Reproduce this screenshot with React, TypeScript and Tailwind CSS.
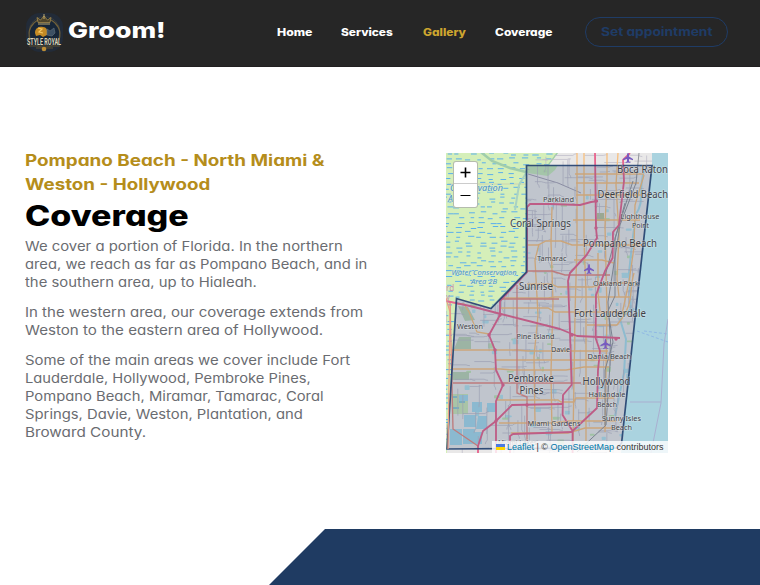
import { useLayoutEffect, useRef, useState, type ReactNode } from 'react';

function Line({ w, children, className = '' }: { w: number; children: ReactNode; className?: string }) {
  const ref = useRef<HTMLSpanElement>(null);
  const [scale, setScale] = useState(1);
  useLayoutEffect(() => {
    if (ref.current) setScale(w / ref.current.offsetWidth);
  }, [w]);
  return (
    <span className={'block text-left whitespace-nowrap ' + className} style={{ width: w }}>
      <span ref={ref} className="inline-block origin-left" style={{ transform: `scaleX(${scale})` }}>
        {children}
      </span>
    </span>
  );
}

function Logo() {
  return (
    <svg className="h-[39px] w-[37px]" viewBox="0 0 37 39">
      <rect width="37" height="39" rx="14" fill="#222b38" />
      <circle cx="18.5" cy="19" r="15.5" fill="#172638" stroke="#3a3e40" />
      <path d="M4 27C1 17 6 10 12 7M33 27C36 17 31 10 25 7" stroke="#6e5f3a" strokeWidth="1.2" fill="none" />
      <path d="M12 9.500 11 4.500 14.500 7 18 3 21.500 7 25 4.500 24 9.500Z" fill="#4f452b" stroke="#a58a4b" strokeWidth=".8" />
      <path d="M18 1v5M12 11h12" stroke="#cfb878" strokeWidth=".9" />
      <path d="M9 20c0-5 4-7 8-6 4 0 5 4 4 8l-4 2-3-2-4 1z" fill="#c48a24" />
      <path d="M12 15l4 1-3 3 4 1" stroke="#f3c662" strokeWidth="1.2" fill="none" />
      <path d="M21 16l3 2 4-3 1 5-3 3-5-1z" fill="#3d5063" stroke="#61717c" strokeWidth=".6" />
      <path d="M3 33h31M10 35h17" stroke="#6e5a31" strokeWidth=".8" />
      <text x="1" y="31.800" textLength="34" lengthAdjust="spacingAndGlyphs" fill="#ded4b5" className="font-['Roboto',sans-serif] text-[8.500px] font-bold">STYLE ROYAL</text>
      <circle cx="18" cy="36" r="2.300" fill="#bd8e35" />
    </svg>
  );
}

type Label = [string, number, number, number, number];
const labels: Label[] = [
  ['Boca Raton', 171, 20, 51, 10.5], ['Deerfield Beach', 151.5, 45, 70.5, 10.5],
  ['Parkland', 97, 49, 31, 7.5], ['Coral Springs', 64, 74, 61, 10.5],
  ['Lighthouse', 174.5, 65.5, 39, 7.5], ['Point', 186, 75, 17, 7.5],
  ['Pompano Beach', 137, 94, 74, 10.5], ['Tamarac', 91, 108, 29.5, 7.5],
  ['Sunrise', 73, 137, 34, 10.5], ['Oakland Park', 147, 133, 46, 7.5],
  ['Fort Lauderdale', 128, 164, 72, 10.5], ['Weston', 11, 176, 26, 7.5],
  ['Pine Island', 70.5, 185.5, 38, 7.5], ['Davie', 105, 199, 19, 7.5],
  ['Dania Beach', 141.5, 205.5, 44, 7.5], ['Pembroke', 62, 228.5, 46, 10.5],
  ['Pines', 73.5, 241, 24, 10.5], ['Hollywood', 136.5, 232, 48, 10.5],
  ['Hallandale', 142.5, 244, 37, 7.5], ['Beach', 151, 253.5, 20, 7.5],
  ['Miami Gardens', 81.5, 273, 53, 7.5], ['Sunny Isles', 156, 267.5, 39, 7.5],
  ['Beach', 165, 277, 21, 7.5], ['Miami Lakes', 52, 291.5, 39, 7.5],
];

const area = 'M80.500 12.500H206L191 147L175.600 290L172 295L1 296L10.500 145.500L45 155.500L80.500 119Z';

// Repeatable jitter for the minor streets, ponds and marsh reeds.
const noise = (n: number) => {
  const v = Math.sin(n * 12.9898) * 43758.5453;
  return v - Math.floor(v);
};

const streets = Array.from({ length: 380 }, (_, i) => {
  const x = noise(i) * 206;
  const y = noise(i + 700) * 300;
  const l = 6 + noise(i + 300) * 19;
  const b = noise(i + 90) * 4 - 2;
  return i % 2 ? `M${x} ${y}h${l}q2 ${b} 4 ${b}` : `M${x} ${y}v${l}q${b} 2 ${b} 4`;
}).join('');

const reeds = Array.from({ length: 62 * 11 }, (_, i) => {
  const row = Math.floor(i / 11);
  const x = (i % 11) * 11 + noise(i + 11) * 7 - 4;
  return `M${x} ${row * 4.9 + Math.floor(noise(i + 500) * 3)}h${3.5 + noise(i + 900) * 3}`;
}).join('');

const ponds = Array.from({ length: 120 }, (_, i) => ({
  x: 10 + noise(i + 41) * 183,
  y: 12 + noise(i + 251) * 282,
  w: 2 + noise(i + 77) * 5,
  h: 1.5 + noise(i + 19) * 4,
  green: i % 3 === 0,
}));

function Plane({ x, y }: { x: number; y: number }) {
  return (
    <path
      transform={`translate(${x} ${y})`}
      d="M0-5C1-5 1-3 1-1.500L5 1V2.200L1 1V3.300L2.500 4.500V5L0 4.400-2.500 5V4.500L-1 3.300V1L-5 2.200V1L-1-1.500C-1-3-1-5 0-5Z"
      fill="#775bc0"
    />
  );
}

function MapDrawing() {
  return (
    <svg className="block h-[300px] w-[222px]" viewBox="0 0 222 300">
      <defs>
        <clipPath id="marsh"><path d="M0 0H112L103 12H81V119L45 155L10 145L1 296V300H0Z" /></clipPath>
        <clipPath id="land"><path d="M81 0H206V12L191 147L176 300H0V145L45 155L81 119Z" /></clipPath>
      </defs>
      <rect width="222" height="300" fill="#aad3df" />
      <path d="M0 0H206V12L191 147L175.600 290L175 300H0Z" fill="#e9e8e8" />
      <g clipPath="url(#marsh)">
        <rect width="112" height="300" fill="#d5efb9" />
        <path d="M2 31H81" stroke="#cdd3b0" />
        <path d={reeds} stroke="#54acef" strokeWidth=".95" fill="none" />
        <path d="M36 0L46 8 64 15 80 19M112 0L103 12" stroke="#a0cdac" strokeWidth="2.500" fill="none" />
        <path d="M80 20L73 32 69 57M80 70V119L45 155" stroke="#a9d3c2" strokeWidth="2" fill="none" />
      </g>
      <g clipPath="url(#land)">
        <path d="M81 12h31l-3 5-7 6-21-3z" fill="#c6e8bb" />
        <path d="M82 21l30 9 23 10" stroke="#a5a0b2" fill="none" />
        {ponds.map((p, i) => (
          <rect key={i} x={p.x} y={p.y} width={p.w} height={p.h} rx=".7" fill={p.green ? '#c1e3b4' : '#b4e0ec'} />
        ))}
        <path d="M12 153l10 1 7 13-10 1zM13 184h12v12H8zM7 219h16v8H6z" fill="#bcd3b5" />
        <path d="M5 241h17v20H6z" fill="#cce7b8" />
        <path d="M6 244h5M13 249h6M7 255h6M16 243h5" stroke="#54acef" />
        <path d="M4 276h12v16H4zM18 262h12v12H18zM32 263h9v13H30zM17 276h12v15H17zM29 279h7v12h-7zM41 250h8v9h-8zM26 249h10v10H26zM13 242h9v6h-9z" fill="#a7d9eb" />
        <path d="M151 60h7v8h-7z" fill="#b9c39e" />
        <path d="M198 18C192 37 199 48 190 61L186 91 183 120 185 156 174 166 180 186 178 220 169 263" stroke="#a9dbea" strokeWidth="2" fill="none" />
        <path d={streets} fill="none" stroke="#bbb9c7" strokeWidth=".7" />
        <g fill="none" stroke="#f7c080" strokeWidth="1.350">
          <path d="M131 0V91l-2 70-2 127M138 0v88l2 50v150M161 0v27l-2 46 2 85-2 121M172 0l-2 32 3 50-2 44 2 18M106 54l-1 35 2 60-2 70 1 62M93 91l-4 16 3 55-4 42 1 66M198 22l-9 30-1 42-5 35-7 32M152 100v40l2 18" />
          <path d="M129 21h69M130 30h63M130 42h66M127 67h67M81 92h11l8 -4h15l11 4h70M81 131h24l7 3h34l18-4h20M54 145h48l7-1h76M54 155h48l7 4h63M6 197h66l10 1h80M50 207h118M6 216h48l13 1h53l18-3h25M50 247h62l3 2h13l2-4h38M53 270h51l18-2h48M65 280h57l17-5h29M11 151h7l5 8 8 20 12 2M188 120c-6 20 2 29-17 52h-30M128 107h28l12 3" />
        </g>
        <g fill="none" stroke="#e58b83" strokeWidth="1.350">
          <path d="M4 148l3 128 25 17M7 230h128M71 132v108l10 4v44M65 118h41l13 4h45M55 146h58" />
        </g>
        <g fill="none" stroke="#91949b" strokeWidth="1">
          <path d="M193 0l-3 30-16 42-12 77 3 47-5 76-29 27M187 28l-18 57v58l-7 15 5 31-8 28v55M179 50l-20 73" />
        </g>
        <g fill="none" stroke="#e7668f" strokeWidth="1.850" strokeLinejoin="round">
          <path d="M149 0L150 75 151 85 140.600 102 124 120 122 128 124 178 125.600 232 117 242 116.600 262 126.600 278V300" />
          <path d="M184 0L177 7 178 28 173 72 167 79 166.600 105 159 118 150 142 149.600 185 154 198 152 217 151 255 126.600 278" />
          <path d="M152 48L145 49 134 52 104 51H84L81 54V119L54 148V162L43 182 49 197 50 217 57 232 50 248V300" />
          <path d="M0 148L24 153 51 160 114 176 131 183 174 185M32 300V293L37 278 50 268 66 252 117 251M64 300V283L67 281 126 279" />
        </g>
        <g fill="#e7668f">{[[150,48],[150,75],[126,182],[170,186],[54,162],[43,182],[49,197],[57,232],[50,268],[81,252]].map(([x,y]) => <circle key={`${x}-${y}`} cx={x} cy={y} r="1.700" />)}</g>
      </g>
      <path d="M191 178l31 11M198 178l24 3" stroke="#90b9e4" strokeDasharray="3 2" />
      <path d="M222 166l-4 25-3 59-10 50M184 249h31" stroke="#a9afd0" fill="none" />
      <path d={area} fill="#1e3a63" fillOpacity=".2" />
      <path d={area} fill="none" stroke="#213f6e" strokeOpacity=".9" strokeWidth="1.700" />
      <path d="M0 145l4 14-2 137" stroke="#ec9d84" strokeWidth="1.200" fill="none" />
      <Plane x={182} y={5} /><Plane x={143} y={116} /><Plane x={159.500} y={191} />
      <g className="font-['Noto_Sans',sans-serif]" fill="#3e4148" stroke="#eef0ed" strokeOpacity=".45" strokeWidth="1.200" paintOrder="stroke">
        {labels.map(([text, x, y, w, size], i) => (
          <text key={i} x={x} y={y} textLength={w} lengthAdjust="spacingAndGlyphs" fontSize={size}>{text}</text>
        ))}
      </g>
      <g className="font-['Noto_Sans',sans-serif] italic" fill="#4994cf" stroke="#dceccb" strokeWidth="1" paintOrder="stroke" fontSize="7.500">
        <text x="5.500" y="121.500" textLength="65" lengthAdjust="spacingAndGlyphs">Water Conservation</text>
        <text x="25" y="130.500" textLength="26" lengthAdjust="spacingAndGlyphs">Area 2B</text>
        <text x="4" y="38" textLength="53" lengthAdjust="spacingAndGlyphs" fontSize="8">Conservation</text>
        <text x="2" y="49" textLength="29" lengthAdjust="spacingAndGlyphs" fontSize="8">Area 2A</text>
      </g>
      <g className="font-['Noto_Sans',sans-serif]" fill="#c690b0" fontSize="8"><text x="0" y="138">rd</text><text x="0" y="147">y</text></g>
    </svg>
  );
}

export default function App() {
  return (
    <div className="flex h-[585px] w-[760px] flex-col overflow-hidden bg-white font-['Inter',sans-serif] [font-feature-settings:'cv11']">
      <header className="flex h-[67px] shrink-0 items-center border-b border-[#211f20] bg-[#262626] pr-8 pb-[2px] pl-[26px] text-white">
        <Logo />
        <Line w={98} className="ml-[4.500px] pb-[4px] text-[22px] leading-[30px] font-extrabold">Groom!</Line>
        <nav className="ml-[111px] flex gap-[29.500px] pt-[2px] text-[10.500px] leading-4 font-extrabold">
          <Line w={35}>Home</Line>
          <Line w={52}>Services</Line>
          <Line w={43} className="text-[#cda52f]">Gallery</Line>
          <Line w={58}>Coverage</Line>
        </nav>
        <button className="ml-auto flex h-[30px] w-[143px] items-center justify-center rounded-full border border-[#1f3c66] text-[12px] font-bold text-[#1f3c66]">
          <Line w={111}>Set appointment</Line>
        </button>
      </header>
      <main className="flex h-[462px] shrink-0 items-start pt-[82px] pl-[25px]">
        <section className="w-[421px]">
          <h2 className="text-[15.500px] leading-6 font-bold text-[#b58d1b]">
            <Line w={299}>Pompano Beach - North Miami &amp;</Line>
            <Line w={185}>Weston - Hollywood</Line>
          </h2>
          <h1 className="-mt-px mb-px text-[28px] leading-10 font-extrabold text-black">
            <Line w={164}>Coverage</Line>
          </h1>
          <div className="flex flex-col gap-3 text-[13px] leading-[18px] font-normal text-[#6a6c71]">
            <div>
              <Line w={318}>We cover a portion of Florida. In the northern</Line>
              <Line w={342}>area, we reach as far as Pompano Beach, and in</Line>
              <Line w={232}>the southern area, up to Hialeah.</Line>
            </div>
            <div>
              <Line w={338}>In the western area, our coverage extends from</Line>
              <Line w={298}>Weston to the eastern area of Hollywood.</Line>
            </div>
            <div>
              <Line w={325}>Some of the main areas we cover include Fort</Line>
              <Line w={286}>Lauderdale, Hollywood, Pembroke Pines,</Line>
              <Line w={299}>Pompano Beach, Miramar, Tamarac, Coral</Line>
              <Line w={278}>Springs, Davie, Weston, Plantation, and</Line>
              <Line w={121}>Broward County.</Line>
            </div>
          </div>
        </section>
        <section className="relative mt-[4px] h-[300px] w-[222px] overflow-hidden">
          <MapDrawing />
          <div className="absolute top-[9px] left-2 flex h-[45px] w-[23px] flex-col overflow-hidden rounded-[2px] bg-white text-black shadow-[0_0_0_1px_#b5bcae]">
            <button className="flex h-[22px] items-center justify-center border-b border-[#cccccc]"><svg className="h-[11px] w-[11px]" viewBox="0 0 11 11"><path d="M.5 5.500h10M5.500 .5v10" stroke="currentColor" strokeWidth="1.600" /></svg></button>
            <button className="flex h-[23px] items-center justify-center"><svg className="h-[11px] w-[11px]" viewBox="0 0 11 11"><path d="M.5 5.500h10" stroke="currentColor" strokeWidth="1.200" /></svg></button>
          </div>
          <div className="absolute right-0 bottom-0 flex h-3 w-[176px] items-center bg-white/80 pl-1 font-['Liberation_Sans',sans-serif] text-[9px] leading-3 text-[#333333]">
            <svg className="mr-[2px] h-[6px] w-[9px]" viewBox="0 0 9 6"><path d="M0 0h9v3H0z" fill="#4c7be1" /><path d="M0 3h9v3H0z" fill="#ffd500" /></svg>
            <Line w={157}><span className="text-[#0078a8]">Leaflet</span> | © <span className="text-[#0078a8]">OpenStreetMap</span> contributors</Line>
          </div>
        </section>
      </main>
      <footer className="ml-[269px] h-14 w-[491px] shrink-0 bg-[#1f3b62] [clip-path:polygon(56px_0,100%_0,100%_100%,0_100%)]" />
    </div>
  );
}
